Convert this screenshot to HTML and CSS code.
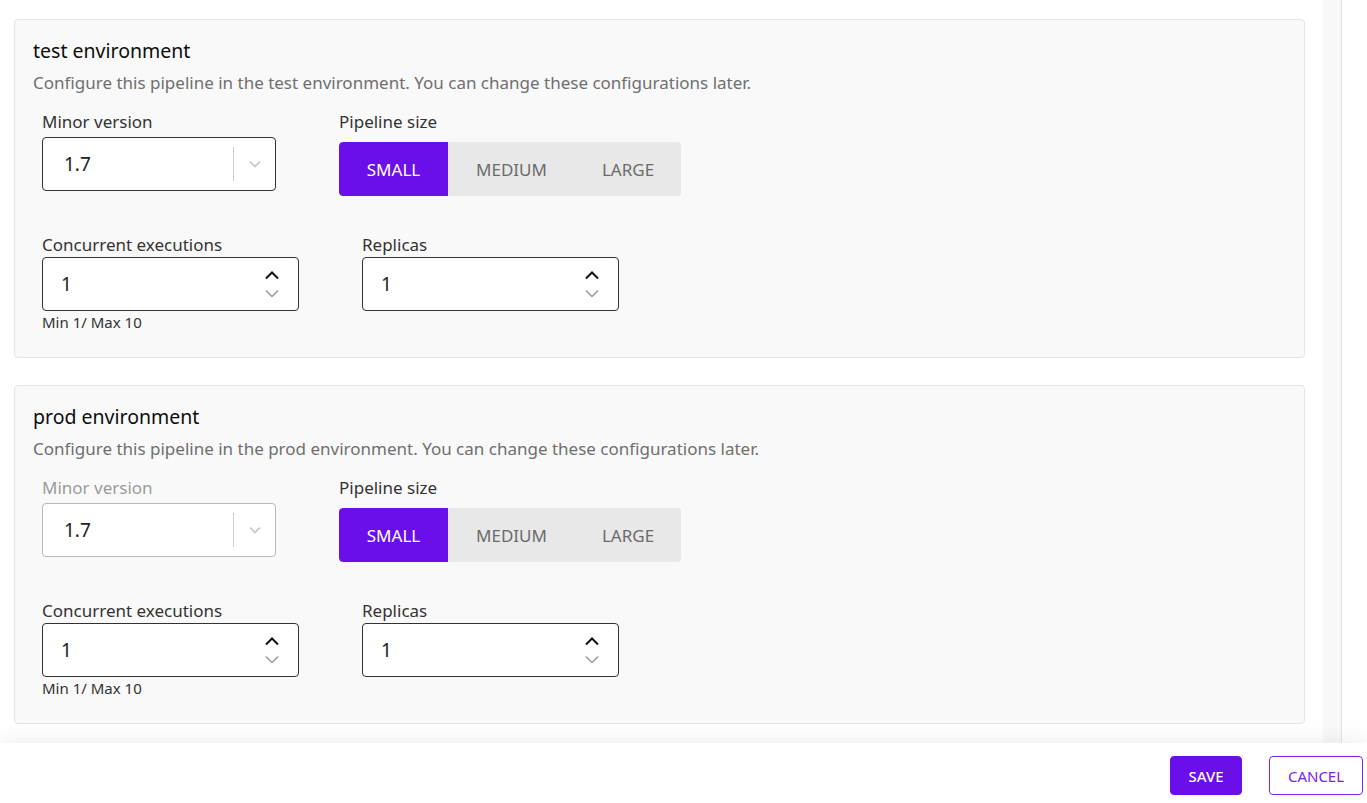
FILE: index.html
```html
<!DOCTYPE html>
<html lang="en">
<head>
<meta charset="utf-8">
<title>Pipeline environments</title>
<link rel="stylesheet" href="styles.css">
</head>
<body>
<div class="page">
  <div class="panel">
    <div class="content">
      <section class="env-card">
        <h2 class="env-title">test environment</h2>
        <p class="env-desc">Configure this pipeline in the test environment. You can change these configurations later.</p>
        <div class="fields">
          <div class="row">
            <div class="field field-select">
              <label class="field-label">Minor version</label>
              <div class="select">
                <span class="select-value">1.7</span>
                <span class="select-sep"></span>
                <svg class="select-chev" viewBox="0 0 12 8" width="12" height="8"><path d="M1 1.5 6 6.5 11 1.5" fill="none" stroke="#c4c4c4" stroke-width="1.6"/></svg>
              </div>
            </div>
            <div class="field field-size">
              <label class="field-label">Pipeline size</label>
              <div class="segmented">
                <button class="seg seg-active">SMALL</button>
                <button class="seg">MEDIUM</button>
                <button class="seg">LARGE</button>
              </div>
            </div>
          </div>
          <div class="row row-numbers">
            <div class="field field-number">
              <label class="field-label">Concurrent executions</label>
              <div class="number">
                <span class="number-value">1</span>
                <span class="spin">
                  <svg viewBox="0 0 16 10" width="16" height="10"><path d="M2 8.5 8 2.5 14 8.5" fill="none" stroke="#111" stroke-width="2"/></svg>
                  <svg viewBox="0 0 16 10" width="16" height="10"><path d="M2 1.5 8 7.5 14 1.5" fill="none" stroke="#9a9a9a" stroke-width="1.5"/></svg>
                </span>
              </div>
              <span class="hint">Min 1/ Max 10</span>
            </div>
            <div class="field field-number">
              <label class="field-label">Replicas</label>
              <div class="number">
                <span class="number-value">1</span>
                <span class="spin">
                  <svg viewBox="0 0 16 10" width="16" height="10"><path d="M2 8.5 8 2.5 14 8.5" fill="none" stroke="#111" stroke-width="2"/></svg>
                  <svg viewBox="0 0 16 10" width="16" height="10"><path d="M2 1.5 8 7.5 14 1.5" fill="none" stroke="#9a9a9a" stroke-width="1.5"/></svg>
                </span>
              </div>
            </div>
          </div>
        </div>
      </section>

      <section class="env-card">
        <h2 class="env-title">prod environment</h2>
        <p class="env-desc">Configure this pipeline in the prod environment. You can change these configurations later.</p>
        <div class="fields">
          <div class="row">
            <div class="field field-select is-disabled">
              <label class="field-label">Minor version</label>
              <div class="select">
                <span class="select-value">1.7</span>
                <span class="select-sep"></span>
                <svg class="select-chev" viewBox="0 0 12 8" width="12" height="8"><path d="M1 1.5 6 6.5 11 1.5" fill="none" stroke="#c4c4c4" stroke-width="1.6"/></svg>
              </div>
            </div>
            <div class="field field-size">
              <label class="field-label">Pipeline size</label>
              <div class="segmented">
                <button class="seg seg-active">SMALL</button>
                <button class="seg">MEDIUM</button>
                <button class="seg">LARGE</button>
              </div>
            </div>
          </div>
          <div class="row row-numbers">
            <div class="field field-number">
              <label class="field-label">Concurrent executions</label>
              <div class="number">
                <span class="number-value">1</span>
                <span class="spin">
                  <svg viewBox="0 0 16 10" width="16" height="10"><path d="M2 8.5 8 2.5 14 8.5" fill="none" stroke="#111" stroke-width="2"/></svg>
                  <svg viewBox="0 0 16 10" width="16" height="10"><path d="M2 1.5 8 7.5 14 1.5" fill="none" stroke="#9a9a9a" stroke-width="1.5"/></svg>
                </span>
              </div>
              <span class="hint">Min 1/ Max 10</span>
            </div>
            <div class="field field-number">
              <label class="field-label">Replicas</label>
              <div class="number">
                <span class="number-value">1</span>
                <span class="spin">
                  <svg viewBox="0 0 16 10" width="16" height="10"><path d="M2 8.5 8 2.5 14 8.5" fill="none" stroke="#111" stroke-width="2"/></svg>
                  <svg viewBox="0 0 16 10" width="16" height="10"><path d="M2 1.5 8 7.5 14 1.5" fill="none" stroke="#9a9a9a" stroke-width="1.5"/></svg>
                </span>
              </div>
            </div>
          </div>
        </div>
      </section>
    </div>
    <div class="track"></div>
  </div>
  <footer class="footer">
    <button class="btn btn-primary">SAVE</button>
    <button class="btn btn-outline">CANCEL</button>
  </footer>
</div>
</body>
</html>
```

FILE: styles.css
```css
* { box-sizing: border-box; }

html, body {
  margin: 0;
  padding: 0;
  height: 100%;
  background: #fff;
}

body {
  font-family: "Noto Sans", "Open Sans", "DejaVu Sans", sans-serif;
  color: #262626;
  overflow: hidden;
}

.page {
  display: flex;
  flex-direction: column;
  height: 803px;
}

.panel {
  display: flex;
  height: 743px;
  width: 1342px;
  border-right: 1px solid #e2e2e2;
  overflow: hidden;
}

.content {
  flex: 1;
  padding: 19px 18px 0 14px;
  display: flex;
  flex-direction: column;
  gap: 27px;
}

.track {
  width: 18px;
  background: #f8f8f8;
}

.env-card {
  background: #f9f9f9;
  border: 1px solid #e5e5e5;
  border-radius: 4px;
  padding: 18px 18px 0 18px;
  height: 339px;
  flex-shrink: 0;
}

.env-title {
  margin: 0;
  font-size: 19.5px;
  line-height: 26px;
  font-weight: 400;
  color: #0d0d0d;
}

.env-desc {
  margin: 7px 0 0;
  font-size: 17px;
  line-height: 24px;
  color: #6f6f6f;
}

.fields {
  padding: 16px 0 0 9px;
}

.row {
  display: flex;
  align-items: flex-start;
}

.row-numbers {
  margin-top: 38px;
  gap: 63px;
}

.field {
  display: flex;
  flex-direction: column;
}

.field-label {
  font-size: 17px;
  line-height: 22px;
  color: #333;
}

.is-disabled .field-label {
  color: #9b9b9b;
}

.field-select {
  width: 234px;
  margin-right: 63px;
}

.select {
  margin-top: 4px;
  height: 54px;
  border: 1px solid #333;
  border-radius: 4px;
  background: #fff;
  display: flex;
  align-items: center;
  padding-left: 21px;
}

.is-disabled .select {
  border-color: #b8b8b8;
}

.select-value {
  flex: 1;
  font-size: 19px;
  color: #222;
}

.select-sep {
  width: 1px;
  height: 34px;
  background: #cfcfcf;
}

.select-chev {
  margin: 0 14px 0 15px;
}

.segmented {
  margin-top: 9px;
  display: flex;
  height: 54px;
  background: #e8e8e8;
  border-radius: 4px;
  overflow: hidden;
  width: 342px;
}

.seg {
  border: 0;
  background: transparent;
  font-family: inherit;
  font-size: 17px;
  color: #6b6b6b;
  padding: 0;
  cursor: pointer;
}

.seg:nth-child(1) { width: 109px; }
.seg:nth-child(2) { width: 127px; }
.seg:nth-child(3) { width: 106px; }

.seg-active {
  background: #6b0fea;
  color: #fff;
  border-radius: 4px 0 0 4px;
}

.field-number {
  width: 257px;
}

.number {
  margin-top: 1px;
  height: 54px;
  border: 1px solid #333;
  border-radius: 4px;
  background: #fff;
  display: flex;
  align-items: center;
  padding-left: 18px;
}

.number-value {
  flex: 1;
  font-size: 19px;
  color: #222;
}

.spin {
  display: flex;
  flex-direction: column;
  gap: 9px;
  margin-right: 18px;
}

.spin svg { display: block; }

.hint {
  margin-top: 1px;
  font-size: 15px;
  line-height: 20px;
  color: #333;
}

.footer {
  position: relative;
  height: 60px;
  background: #fff;
  box-shadow: 0 -6px 16px rgba(0, 0, 0, 0.05);
  display: flex;
  justify-content: flex-end;
  align-items: flex-start;
  padding: 13px 4px 0 0;
  gap: 27px;
}

.btn {
  height: 39px;
  border-radius: 4px;
  font-family: inherit;
  font-size: 15px;
  cursor: pointer;
}

.btn-primary {
  width: 72px;
  background: #6b0fea;
  border: 1px solid #6b0fea;
  color: #fff;
  font-weight: 500;
}

.btn-outline {
  width: 94px;
  background: #fff;
  border: 1px solid #7a22f0;
  color: #7a22f0;
}
```
